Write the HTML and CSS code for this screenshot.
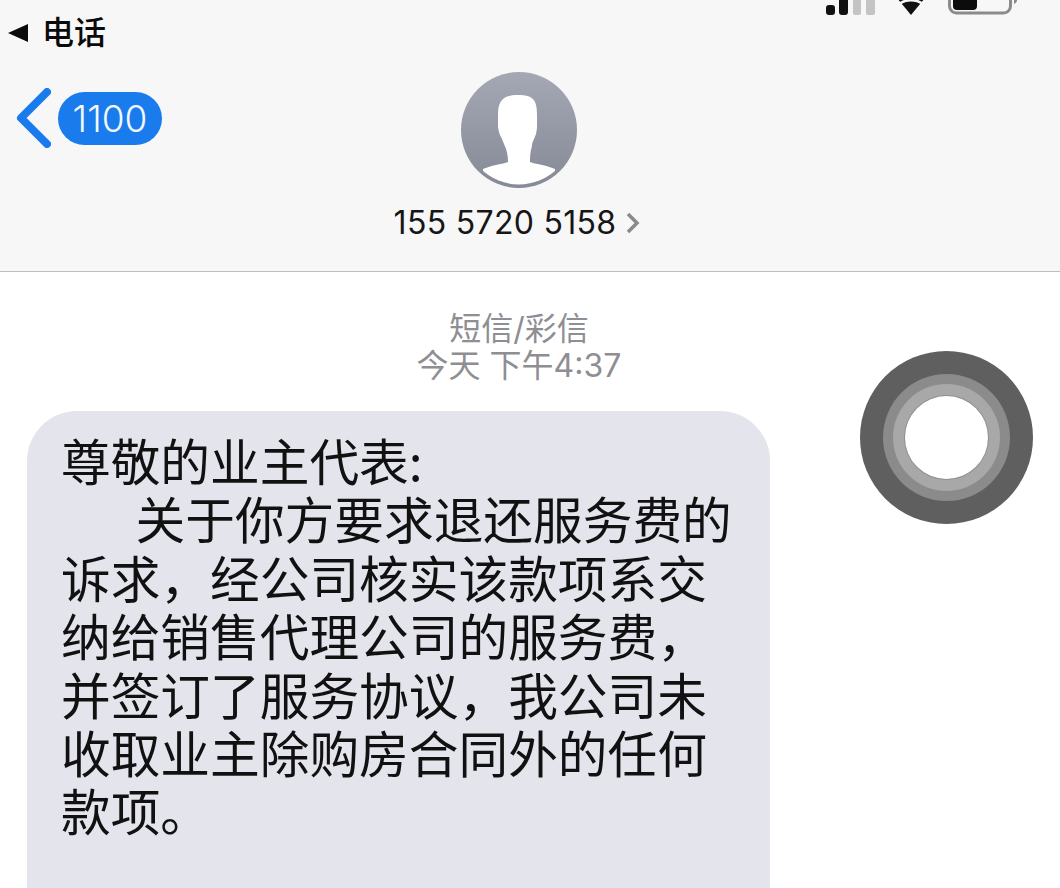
FILE: index.html
```html
<!DOCTYPE html>
<html lang="zh-CN">
<head>
<meta charset="utf-8">
<title>短信</title>
<link rel="stylesheet" href="styles.css">
</head>
<body>
<div class="page">
  <header class="header">
    <div class="status">
      <div class="carrier">
        <svg class="carrier-arrow" viewBox="0 0 20 20" width="20" height="20"><path d="M0 10 20 1V19Z" fill="#0a0a0a"/></svg>
        <span class="carrier-text">电话</span>
      </div>
      <svg class="status-icons" viewBox="0 0 198 18" width="198" height="18">
        <rect x="0" y="6" width="9" height="10" rx="3" fill="#111"/>
        <rect x="13" y="-4" width="9" height="20" rx="3" fill="#111"/>
        <rect x="27" y="-4" width="8" height="20" rx="2" fill="#c4c4c4"/>
        <rect x="40" y="-4" width="9" height="20" rx="2" fill="#c4c4c4"/>
        <path d="M71-1 85 16 99-1 93-4H77Z" fill="#111"/>
        <path d="M74 4.5C80 0 90 0 96 4.500" stroke="#f7f7f7" stroke-width="2.500" fill="none"/>
        <rect x="123.500" y="-12" width="61" height="26" rx="7" fill="none" stroke="#8b8b8b" stroke-width="3"/>
        <rect x="127" y="-8" width="24" height="19" rx="4" fill="#0c0c0c"/>
        <path d="M188-2C192-1 192 3 188 5Z" fill="#8b8b8b"/>
      </svg>
    </div>
    <div class="nav">
      <div class="back">
        <svg class="chevron" viewBox="0 0 36 60" width="36" height="60"><path d="M32 4 6 30 32 56" fill="none" stroke="#1a7cec" stroke-width="8" stroke-linecap="round" stroke-linejoin="round"/></svg>
        <span class="badge">1100</span>
      </div>
      <div class="contact">
        <svg class="avatar" viewBox="0 0 116 116" width="116" height="116">
          <defs>
            <linearGradient id="avatarFill" x1="0" y1="0" x2="0" y2="1">
              <stop offset="0" stop-color="#a4a8b4"/>
              <stop offset="1" stop-color="#858a96"/>
            </linearGradient>
            <clipPath id="avatarClip"><circle cx="58" cy="58" r="54.500"/></clipPath>
          </defs>
          <circle cx="58" cy="58" r="58" fill="url(#avatarFill)"/>
          <path clip-path="url(#avatarClip)" d="M37 42C37 28 43 23 57 23 72 23 76 28 76 42V56L75 62C73 68 71 70 71 74 69 80 69 86 69 90 74 92 85 93 94 97V120H22V97C31 93 42 92 47 90 47 84 46 78 43 72 41 66 39 64 38 60L37 55Z" fill="#fff"/>
        </svg>
        <div class="phone">
          <span>155 5720 5158</span>
          <svg class="phone-arrow" viewBox="0 0 14 22" width="14" height="22"><path d="M2 2 11 11 2 20" fill="none" stroke="#8a8a8e" stroke-width="3.500"/></svg>
        </div>
      </div>
    </div>
  </header>
  <main class="thread">
    <div class="meta">
      <div class="meta-line">短信/彩信</div>
      <div class="meta-line">今天 下午4:37</div>
    </div>
    <div class="bubble">
      <p class="salute">尊敬的业主代表:</p>
      <p class="body-text">关于你方要求退还服务费的诉求&#xFF0C;经公司核实该款项系交纳给销售代理公司的服务费&#xFF0C;并签订了服务协议&#xFF0C;我公司未收取业主除购房合同外的任何款项。</p>
    </div>
  </main>
  <div class="touch">
    <div class="touch-ring-outer">
      <div class="touch-ring-inner">
        <div class="touch-core"></div>
      </div>
    </div>
  </div>
</div>
</body>
</html>
```
FILE: styles.css
```css
* { box-sizing: border-box; }
html, body { margin: 0; padding: 0; }
body {
  background: #fff;
  font-family: "Inter", "Noto Sans CJK SC", sans-serif;
  color: #0b0b0b;
}
.page {
  position: relative;
  width: 1060px;
  height: 888px;
  overflow: hidden;
}
.header {
  height: 272px;
  background: #f7f7f7;
  border-bottom: 1px solid #bdbdbd;
}
.status {
  height: 72px;
  display: flex;
  justify-content: space-between;
  align-items: flex-start;
  padding: 0 36px 0 8px;
}
.status-icons { display: block; margin: -1px 0 0; overflow: hidden; }
.carrier {
  display: flex;
  align-items: center;
  gap: 14px;
  margin-top: 10px;
  height: 46px;
}
.carrier-arrow { display: block; }
.carrier-text {
  font: 500 32px/46px "Noto Sans CJK SC", sans-serif;
  margin-top: -6px;
}
.nav {
  position: relative;
  height: 199px;
}
.back {
  position: absolute;
  left: 15px;
  top: 16px;
  display: flex;
  align-items: center;
  gap: 7px;
}
.chevron { display: block; }
.badge {
  width: 104px;
  height: 53px;
  border-radius: 27px;
  background: #1a7cec;
  color: #f2f8ff;
  font: 300 37px/53px "Inter", sans-serif;
  text-align: center;
}
.contact {
  display: flex;
  flex-direction: column;
  align-items: center;
  padding-right: 22px;
}
.avatar { display: block; margin-right: 0; }
.phone {
  display: flex;
  align-items: center;
  gap: 10px;
  margin-top: 16px;
  margin-left: -4px;
  font: 400 32px/38px "Inter", sans-serif;
  letter-spacing: 0.3px;
  color: #161616;
  white-space: nowrap;
}
.phone-arrow { display: block; }
.thread { padding-top: 38px; }
.meta {
  text-align: center;
  color: #8e8e93;
  font: 400 32px/37px "Inter", "Noto Sans CJK SC", sans-serif;
  padding-right: 22px;
}
.meta-line { height: 37px; }
.bubble {
  width: 743px;
  min-height: 600px;
  margin: 27px 0 0 27px;
  padding: 19px 36px 0 34px;
  background: #e4e4ec;
  border-radius: 50px;
  font: 400 49.700px/58.400px "Noto Sans CJK SC", sans-serif;
  color: #111;
}
.salute, .body-text { margin: 0; }
.body-text { text-indent: 1.5em; }
.touch {
  position: absolute;
  left: 860px;
  top: 351px;
  width: 173px;
  height: 173px;
  border-radius: 50%;
  background: #5f5f5f;
  display: flex;
  align-items: center;
  justify-content: center;
}
.touch-ring-outer {
  width: 127px;
  height: 127px;
  border-radius: 50%;
  background: #8b8b8b;
  display: flex;
  align-items: center;
  justify-content: center;
}
.touch-ring-inner {
  width: 107px;
  height: 107px;
  border-radius: 50%;
  background: #a8a8a8;
  display: flex;
  align-items: center;
  justify-content: center;
}
.touch-core {
  width: 83px;
  height: 83px;
  border-radius: 50%;
  background: #fff;
  box-shadow: 0 0 0 1px #8f8f8f;
}
```
